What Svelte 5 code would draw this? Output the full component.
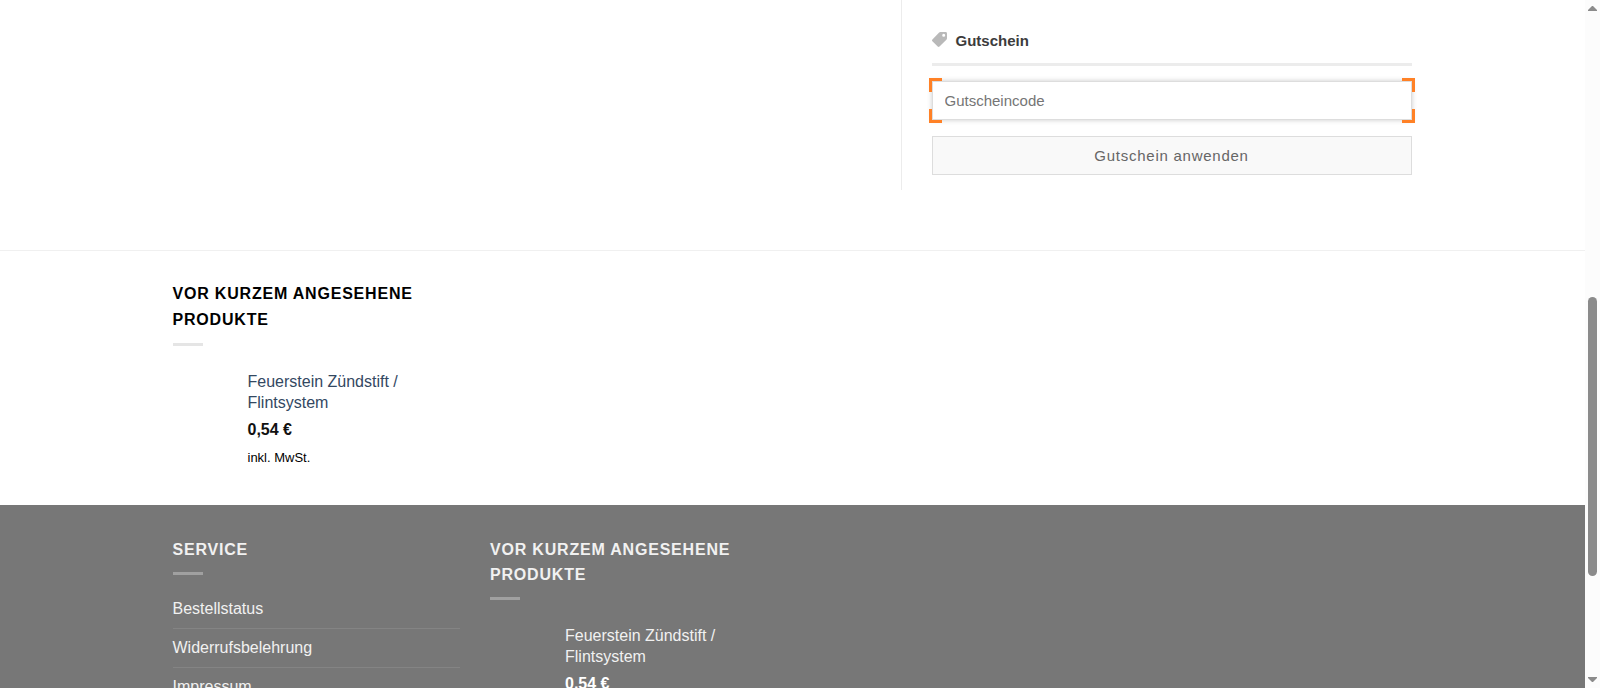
<script>
  const service = ['Bestellstatus', 'Widerrufsbelehrung', 'Impressum'];
  const product = { name: 'Feuerstein Zündstift / Flintsystem', price: '0,54 €', tax: 'inkl. MwSt.' };
  const scroll = { before: 278, thumb: 279, after: 93 };
  let code = $state('');
</script>

{#snippet recent()}
  <section class="col">
    <h2>Vor kurzem angesehene Produkte</h2>
    <div class="bar"></div>
    <div class="product">
      <a href="#produkt">{product.name}</a>
      <strong>{product.price}</strong>
      <small>{product.tax}</small>
    </div>
  </section>
{/snippet}

<div class="viewport">
  <div class="page">
    <main class="container cart">
      <form class="coupon" onsubmit={(e) => e.preventDefault()}>
        <label class="title" for="coupon-code">
          <svg viewBox="0 0 15 15" aria-hidden="true">
            <path fill-rule="evenodd" d="M8.4 0H13.6Q15 0 15 1.4V6.2Q15 7.1 14.4 7.7L7.5 14.6Q6.6 15.4 5.7 14.6L.4 9.3Q-.4 8.4.4 7.5L6.9.7Q7.5 0 8.4 0ZM11.7 1.7A1.5 1.5 0 1 0 11.7 4.7A1.5 1.5 0 1 0 11.7 1.7Z" />
          </svg>
          Gutschein
        </label>
        <div class="field">
          <input id="coupon-code" type="text" placeholder="Gutscheincode" bind:value={code} />
          <i class="corner top left"></i>
          <i class="corner top right"></i>
          <i class="corner bottom left"></i>
          <i class="corner bottom right"></i>
        </div>
        <button type="submit">Gutschein anwenden</button>
      </form>
    </main>

    <div class="widgets light">
      <div class="container columns">{@render recent()}</div>
    </div>

    <footer class="widgets dark">
      <div class="container columns">
        <section class="col">
          <h2>Service</h2>
          <div class="bar"></div>
          <ul>
            {#each service as item}
              <li><a href="#service">{item}</a></li>
            {/each}
          </ul>
        </section>
        {@render recent()}
      </div>
    </footer>
  </div>

  <div class="scrollbar" aria-hidden="true">
    <svg viewBox="0 0 9 5"><path d="M4 0H5L9 4V5H0V4Z" /></svg>
    <div class="track">
      <div style:flex-grow={scroll.before}></div>
      <div class="thumb" style:flex-grow={scroll.thumb}></div>
      <div style:flex-grow={scroll.after}></div>
    </div>
    <svg viewBox="0 0 9 5"><path d="M0 0H9V1L5 5H4L0 1Z" /></svg>
  </div>
</div>

<style>
  :global(body) {
    margin: 0;
    background: #fff;
    font-family: "Liberation Sans", Arial, sans-serif;
    font-size: 16px;
  }
  * { box-sizing: border-box; }
  .viewport {
    display: flex;
    height: 100vh;
    overflow: hidden;
  }
  .page { flex: 1; min-width: 0; }
  .container {
    max-width: 1270px;
    margin: 0 auto;
    padding: 0 15px;
  }
  .cart {
    display: grid;
    grid-template-columns: 728fr 511fr;
    padding: 0 16px 60px 15px;
  }
  .coupon {
    grid-column: 2;
    display: flex;
    flex-direction: column;
    padding: 29px 0 15px 30px;
    border-left: 1px solid #ececec;
  }
  .title {
    display: flex;
    align-items: flex-start;
    gap: 9px;
    padding-bottom: 10px;
    border-bottom: 3px solid #ececec;
    color: #3c3c3c;
    font-size: 15px;
    font-weight: bold;
    line-height: 24px;
  }
  .title svg { width: 15px; height: 15px; margin-top: 3px; fill: #b9b9b9; }
  .field { position: relative; margin: 15px 0 16px; }
  input {
    display: block;
    width: 100%;
    height: 39px;
    padding: 0 12px;
    border: 1px solid #ddd;
    border-radius: 0;
    outline: none;
    background: #fff;
    box-shadow: 0 0 5px #ccc;
    color: #333;
    font: 15px "Liberation Sans", Arial, sans-serif;
  }
  input::placeholder { color: #757575; }
  .corner {
    position: absolute;
    width: 13px;
    height: 14px;
    border: 0 solid #ff8126;
    pointer-events: none;
  }
  .top { top: -3px; border-top-width: 3px; }
  .bottom { bottom: -3px; border-bottom-width: 3px; }
  .left { left: -3px; border-left-width: 3px; }
  .right { right: -3px; border-right-width: 3px; }
  button {
    height: 39px;
    padding: 0 12px;
    border: 1px solid #ddd;
    background: #f9f9f9;
    color: #666;
    font: 15px "Liberation Sans", Arial, sans-serif;
    letter-spacing: 0.05em;
  }
  .widgets { padding-top: 30px; }
  .light { padding-bottom: 34px; border-top: 1px solid #f0f0f0; }
  .dark { padding-top: 32px; background: #777; min-height: 100vh; }
  .columns {
    display: grid;
    grid-template-columns: repeat(4, 1fr);
    column-gap: 30px;
  }
  h2 {
    margin: 0;
    color: #000;
    font-size: 16px;
    line-height: 26px;
    letter-spacing: 0.05em;
    text-transform: uppercase;
  }
  .bar { width: 30px; height: 3px; margin-top: 10px; background: #e5e5e5; }
  .product {
    display: flex;
    flex-direction: column;
    padding: 25px 0 0 75px;
    color: #111;
    line-height: 26px;
  }
  .product a { margin-bottom: 4px; line-height: 21px; }
  .product small { margin-top: 2px; font-size: 13px; color: #000; }
  a { color: #334862; text-decoration: none; }
  ul { margin: 15px 0 0; padding: 0; list-style: none; }
  li { padding: 6px 0; line-height: 26px; }
  li + li { border-top: 1px solid #848484; }
  .dark h2 { line-height: 25px; }
  .dark h2, .dark a { color: #f1f1f1; }
  .dark .product, .dark small { color: #fff; }
  .dark .bar { background: #a0a0a0; }
  .scrollbar {
    display: flex;
    flex-direction: column;
    align-items: center;
    width: 15px;
    padding: 6px 0;
    background: #fcfcfc;
  }
  .scrollbar svg { width: 9px; height: 5px; fill: #8b8b8b; }
  .track {
    display: flex;
    flex: 1;
    flex-direction: column;
    width: 9px;
    margin: 8px 0;
  }
  .thumb { border-radius: 5px; background: #8b8b8b; }
</style>
